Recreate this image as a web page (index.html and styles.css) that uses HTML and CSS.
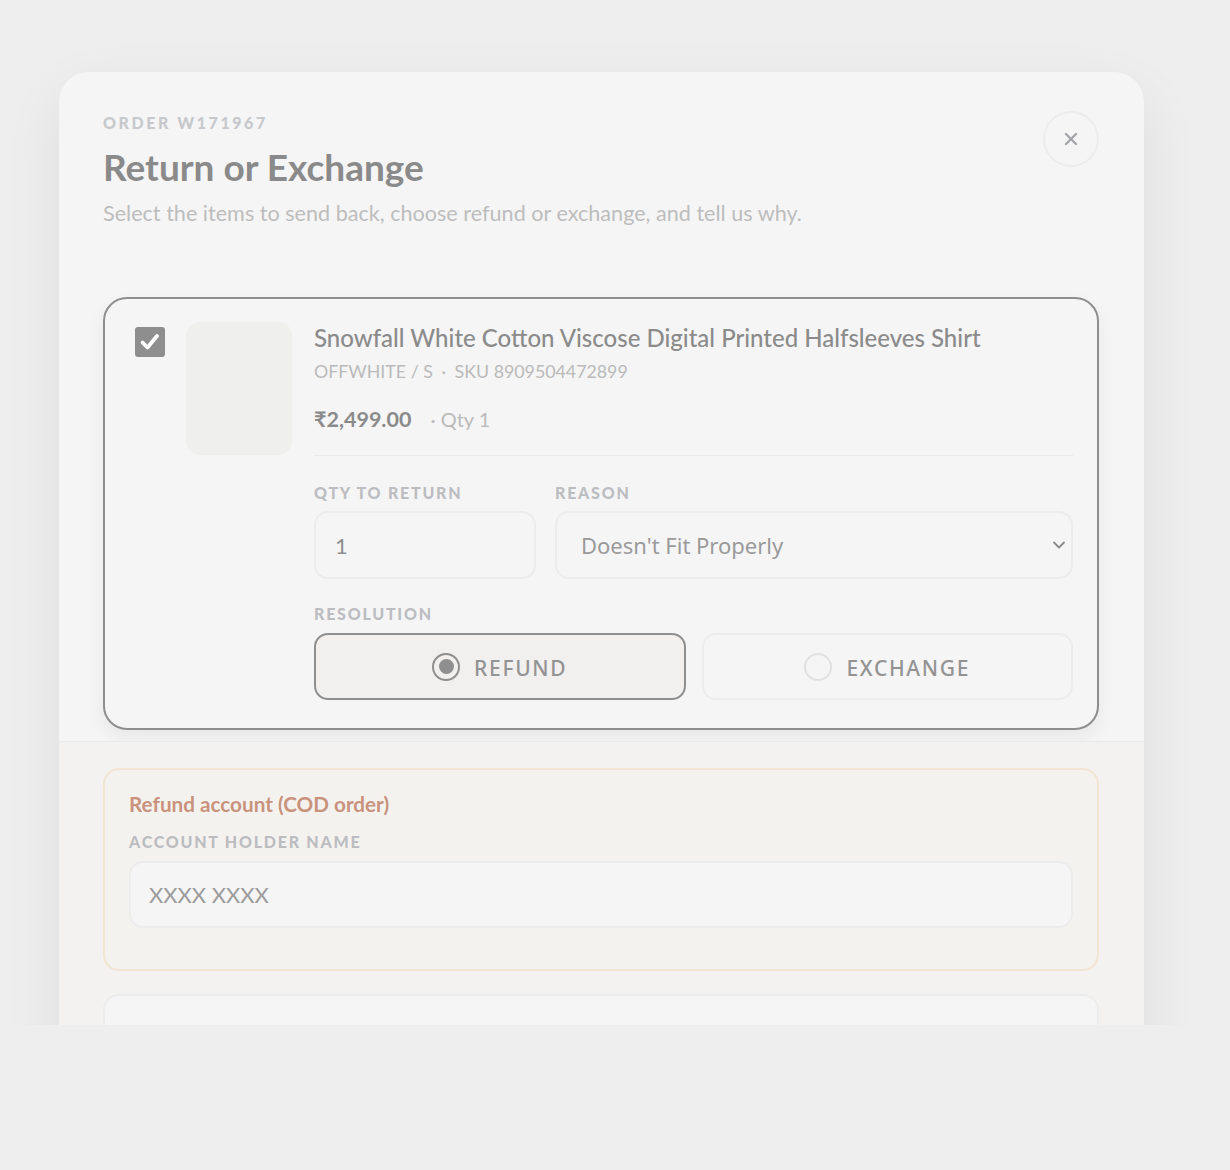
FILE: index.html
```html
<!DOCTYPE html>
<html lang="en">
<head>
<meta charset="utf-8">
<title>Return or Exchange</title>
<link rel="stylesheet" href="styles.css">
</head>
<body>
<div class="viewport">
  <div class="overlay">
    <div class="modal">
      <div class="modal-head">
        <div class="head-text">
          <div class="eyebrow">ORDER W171967</div>
          <h1 class="title">Return or Exchange</h1>
          <p class="subtitle">Select the items to send back, choose refund or exchange, and tell us why.</p>
        </div>
        <button class="close" aria-label="Close">
          <svg width="16" height="16" viewBox="0 0 16 16"><path d="M3 3 L13 13 M13 3 L3 13" stroke="#a3a5aa" stroke-width="2.4" stroke-linecap="round"/></svg>
        </button>
      </div>

      <div class="items">
        <div class="item-card">
          <div class="check">
            <svg width="24" height="24" viewBox="0 0 24 24"><path d="M4.5 12.5 L9.5 17.5 L19 6" fill="none" stroke="#fff" stroke-width="3.8" stroke-linecap="round" stroke-linejoin="round"/></svg>
          </div>
          <div class="thumb"></div>
          <div class="item-body">
            <div class="item-name">Snowfall White Cotton Viscose Digital Printed Halfsleeves Shirt</div>
            <div class="item-meta">OFFWHITE / S <span class="dot">·</span> SKU 8909504472899</div>
            <div class="item-price"><span class="price">₹2,499.00</span><span class="qty">· Qty 1</span></div>
            <div class="fields">
              <div class="field">
                <div class="label">QTY TO RETURN</div>
                <div class="input">1</div>
              </div>
              <div class="field">
                <div class="label">REASON</div>
                <div class="input select">
                  <span>Doesn't Fit Properly</span>
                  <svg width="14" height="10" viewBox="0 0 14 10"><path d="M2 2.5 L7 7.5 L12 2.5" fill="none" stroke="#8a8a8a" stroke-width="1.8" stroke-linecap="round" stroke-linejoin="round"/></svg>
                </div>
              </div>
            </div>
            <div class="label res-label">RESOLUTION</div>
            <div class="resolution">
              <div class="res-btn active"><span class="radio on"></span><span>REFUND</span></div>
              <div class="res-btn"><span class="radio"></span><span>EXCHANGE</span></div>
            </div>
          </div>
        </div>
      </div>

      <div class="lower">
        <div class="refund-box">
          <div class="refund-title">Refund account (COD order)</div>
          <div class="label">ACCOUNT HOLDER NAME</div>
          <div class="input placeholder">XXXX XXXX</div>
        </div>
        <div class="next-box"></div>
      </div>
    </div>
  </div>
</div>
</body>
</html>
```

FILE: styles.css
```css
* { box-sizing: border-box; }
html, body { margin: 0; padding: 0; }
body {
  background: #eeeeee;
  font-family: Lato, "Noto Sans", sans-serif;
  height: 1170px;
}
.viewport {
  height: 1025px;
  overflow: hidden;
}
.overlay {
  padding-top: 72px;
  padding-left: 59px;
}
.modal {
  width: 1085px;
  background: #f5f5f5;
  border-radius: 30px 30px 0 0;
  box-shadow: 0 20px 60px rgba(0, 0, 0, 0.07);
  height: 1100px;
  overflow: hidden;
}
.modal-head {
  display: flex;
  justify-content: space-between;
  align-items: flex-start;
  padding: 41px 45px 0 44px;
}
.eyebrow {
  font-size: 16px;
  line-height: 20px;
  font-weight: 900;
  letter-spacing: 0.16em;
  color: #c7c8cc;
}
.title {
  margin: 12px 0 0;
  font-size: 37px;
  line-height: 44px;
  font-weight: 700;
  color: #8a8a8a;
}
.subtitle {
  margin: 10px 0 0;
  font-size: 21.6px;
  line-height: 28px;
  color: #bdbdbd;
}
.close {
  width: 56px;
  height: 56px;
  margin-top: -2px;
  border-radius: 50%;
  border: 2px solid #ececec;
  background: #f5f5f5;
  display: flex;
  align-items: center;
  justify-content: center;
  padding: 0;
}
.items {
  padding: 70px 45px 11px 44px;
}
.item-card {
  display: flex;
  align-items: flex-start;
  border: 2px solid #8e8e8e;
  border-radius: 24px;
  padding: 23px 24px 28px 29px;
  background: #f5f5f5;
  box-shadow: 0 8px 18px rgba(0, 0, 0, 0.06);
}
.check {
  width: 30px;
  height: 30px;
  margin-top: 5px;
  margin-left: 1px;
  border-radius: 3px;
  background: #8e8e8e;
  display: flex;
  align-items: center;
  justify-content: center;
  flex: none;
}
.thumb {
  width: 106px;
  height: 133px;
  margin-left: 21px;
  border-radius: 14px;
  background: #efefee;
  flex: none;
}
.item-body {
  flex: 1;
  margin-left: 22px;
}
.item-name {
  font-size: 24px;
  line-height: 31px;
  color: #8b8b8b;
  font-weight: 500;
}
.item-meta {
  margin-top: 6px;
  font-size: 17.8px;
  line-height: 24px;
  color: #bababa;
}
.dot { margin: 0 4px; }
.item-price {
  margin-top: 22px;
  line-height: 28px;
  padding-bottom: 22px;
  border-bottom: 1px solid #e9e9e9;
  display: flex;
  align-items: baseline;
}
.price {
  font-size: 21.5px;
  font-weight: 700;
  color: #8a8a8a;
}
.qty {
  margin-left: 19px;
  font-size: 20px;
  color: #bababa;
}
.fields {
  display: grid;
  grid-template-columns: 222px 1fr;
  column-gap: 19px;
  margin-top: 27px;
}
.label {
  font-size: 16px;
  line-height: 20px;
  font-weight: 900;
  letter-spacing: 0.11em;
  color: #bcbdc1;
}
.input {
  margin-top: 8px;
  height: 68px;
  border: 2px solid #ececec;
  border-radius: 14px;
  background: #f5f5f5;
  display: flex;
  align-items: center;
  padding: 0 19px;
  font-size: 22px;
  color: #8f8f8f;
}
.select {
  justify-content: space-between;
  padding: 0 5px 0 24px;
  font-family: "Noto Sans", sans-serif;
  font-size: 22px;
  color: #9a9a9a;
}
.res-label {
  margin-top: 25px;
}
.resolution {
  display: grid;
  grid-template-columns: 1fr 1fr;
  column-gap: 16px;
  margin-top: 9px;
}
.res-btn {
  height: 67px;
  border: 2px solid #ececec;
  border-radius: 14px;
  display: flex;
  align-items: center;
  justify-content: center;
  gap: 14px;
  padding-top: 3px;
  font-family: "Noto Sans", sans-serif;
  font-size: 21px;
  font-weight: 500;
  letter-spacing: 0.08em;
  color: #939393;
}
.res-btn.active {
  border-color: #8f8f8f;
  background: #f1f0ef;
}
.radio {
  width: 28px;
  height: 28px;
  margin-top: -3px;
  border-radius: 50%;
  border: 2px solid #e1e1e1;
  flex: none;
  display: flex;
  align-items: center;
  justify-content: center;
}
.radio.on {
  border: 2.5px solid #8f8f8f;
}
.radio.on::after {
  content: "";
  width: 15px;
  height: 15px;
  border-radius: 50%;
  background: #8f8f8f;
}
.lower {
  border-top: 1px solid #e9e9e9;
  background: #f3f2f0;
  padding: 26px 45px 40px 44px;
}
.refund-box {
  border: 2px solid #f1e4d0;
  border-radius: 16px;
  background: #f4f2ee;
  padding: 21px 24px 41px 24px;
}
.refund-title {
  font-size: 20.7px;
  line-height: 26px;
  font-weight: 700;
  color: #c9927d;
}
.refund-box .label {
  margin-top: 15px;
}
.placeholder {
  margin-top: 9px;
  height: 67px;
  padding-left: 18px;
  font-family: Lato, sans-serif;
  font-size: 22px;
  color: #9c9c9c;
}
.next-box {
  margin-top: 23px;
  height: 120px;
  border: 2px solid #ececec;
  border-radius: 16px;
  background: #f5f5f5;
}
```
